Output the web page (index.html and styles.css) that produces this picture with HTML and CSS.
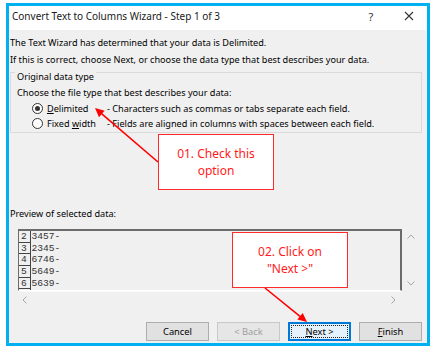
FILE: index.html
```html
<!DOCTYPE html>
<html>
<head>
<meta charset="utf-8">
<link rel="stylesheet" href="styles.css">
</head>
<body>
<div class="dialog">
  <div class="titlebar">
    <span class="title">Convert Text to Columns Wizard - Step 1 of 3</span>
    <span class="help">?</span>
    <span class="close">
      <svg width="10" height="10" viewBox="0 0 10 10"><path d="M1 1L9 9M9 1L1 9" stroke="#333" stroke-width="1.1" fill="none"/></svg>
    </span>
  </div>
  <div class="content">
    <p class="line">The Text Wizard has determined that your data is Delimited.</p>
    <p class="line">If this is correct, choose Next, or choose the data type that best describes your data.</p>
    <div class="group">
      <div class="legend">Original data type</div>
      <div class="choose">Choose the file type that best describes your data:</div>
      <div class="radio-row">
        <span class="radio checked"></span>
        <span class="rlabel"><u>D</u>elimited</span>
        <span class="rdesc">- Characters such as commas or tabs separate each field.</span>
      </div>
      <div class="radio-row">
        <span class="radio"></span>
        <span class="rlabel">Fixed <u>w</u>idth</span>
        <span class="rdesc">- Fields are aligned in columns with spaces between each field.</span>
      </div>
    </div>
    <div class="preview-label">Preview of selected data:</div>
    <div class="preview">
      <div class="pbox">
        <div class="prow"><span class="pnum">2</span><span class="pdata">3457-</span></div>
        <div class="prow"><span class="pnum">3</span><span class="pdata">2345-</span></div>
        <div class="prow"><span class="pnum">4</span><span class="pdata">6746-</span></div>
        <div class="prow"><span class="pnum">5</span><span class="pdata">5649-</span></div>
        <div class="prow"><span class="pnum">6</span><span class="pdata">5639-</span></div>
        <div class="prow"><span class="pnum"></span></div>
      </div>
      <div class="vscroll">
        <svg width="8" height="5" viewBox="0 0 8 5"><path d="M0.5 4.5L4 1L7.5 4.5" stroke="#a6a6a6" fill="none"/></svg>
        <svg width="8" height="5" viewBox="0 0 8 5"><path d="M0.5 0.5L4 4L7.5 0.5" stroke="#a6a6a6" fill="none"/></svg>
      </div>
      <div class="hscroll">
        <svg width="5" height="8" viewBox="0 0 5 8"><path d="M4.5 0.5L1 4L4.5 7.5" stroke="#a6a6a6" fill="none"/></svg>
        <svg width="5" height="8" viewBox="0 0 5 8"><path d="M0.5 0.5L4 4L0.5 7.5" stroke="#a6a6a6" fill="none"/></svg>
      </div>
      <div class="corner"></div>
    </div>
    <div class="buttons">
      <div class="btn"><span>Cancel</span></div>
      <div class="btn disabled"><span>&lt; Back</span></div>
      <div class="btn focused"><span class="focus-rect"><span><u>N</u>ext &gt;</span></span></div>
      <div class="btn"><span><u>F</u>inish</span></div>
    </div>
  </div>
</div>

<div class="callout c1">01. Check this<br>option</div>
<div class="callout c2">02. Click on<br>"Next &gt;"</div>

<svg class="arrows" width="435" height="352" viewBox="0 0 435 352">
  <line x1="158" y1="162" x2="101.8" y2="113.9" stroke="#ff0000" stroke-width="1.6"/>
  <polygon points="95,108 104.6,110.8 99,117.2" fill="#ff0000"/>
  <line x1="265" y1="288" x2="300" y2="316.3" stroke="#ff0000" stroke-width="1.6"/>
  <polygon points="307,322 297.3,319.6 302.7,313" fill="#ff0000"/>
</svg>
</body>
</html>
```

FILE: styles.css
```css
html, body {
  margin: 0;
  padding: 0;
  background: #ffffff;
}
body {
  width: 435px;
  height: 352px;
  position: relative;
  overflow: hidden;
  font-family: "Noto Sans", "Open Sans", sans-serif;
  font-size: 9.15px;
  color: #000;
}
.dialog {
  box-sizing: border-box;
  width: 424px;
  height: 343px;
  margin: 3px 0 0 6px;
  border: 3px solid #00b0f0;
  background: #f0f0f0;
  display: flex;
  flex-direction: column;
}
.titlebar {
  height: 24px;
  background: #ffffff;
  display: flex;
  align-items: center;
  padding: 0 0 4px 3px;
  box-sizing: border-box;
  font-size: 10px;
}
.title {
  flex: 1;
  color: #1a1a1a;
}
.help {
  width: 12px;
  text-align: center;
  margin-right: 27px;
  font-size: 11px;
  color: #333;
}
.close {
  width: 10px;
  height: 10px;
  display: flex;
  margin-right: 13px;
}
.content {
  flex: 1;
  display: flex;
  flex-direction: column;
  padding: 4px 5px 2px 1px;
}
.line {
  margin: 0;
  line-height: 17px;
  height: 17px;
  white-space: nowrap;
}
.group {
  margin-top: 4px;
  height: 61px;
  box-sizing: border-box;
  border: 1px solid #dadada;
  padding: 0 0 0 6px;
  display: flex;
  flex-direction: column;
}
.legend {
  align-self: flex-start;
  margin: -2px 0 0 -2px;
  padding: 0 2px;
  background: #f0f0f0;
  line-height: 12px;
  height: 12px;
}
.choose {
  margin-top: 4px;
  line-height: 12px;
  height: 12px;
}
.radio-row {
  display: flex;
  align-items: center;
  height: 15px;
  margin-left: 15px;
}
.choose + .radio-row {
  margin-top: 1.5px;
}
.radio {
  box-sizing: border-box;
  width: 11px;
  height: 11px;
  border: 1px solid #333;
  border-radius: 50%;
  background: #fff;
  display: flex;
  align-items: center;
  justify-content: center;
}
.radio.checked::after {
  content: "";
  width: 5px;
  height: 5px;
  border-radius: 50%;
  background: #333;
}
.rlabel {
  margin-left: 4px;
  width: 60px;
}
.rdesc {
  white-space: nowrap;
}
.preview-label {
  margin-top: 75px;
  line-height: 12px;
  height: 12px;
}
.preview {
  margin: 9px 0 0 8px;
  display: grid;
  grid-template-columns: 384px 16px;
  grid-template-rows: 62px 17px;
}
.pbox {
  box-sizing: border-box;
  border-top: 2px solid #6b6b6b;
  border-left: 1px solid #6b6b6b;
  border-right: 2px solid #6b6b6b;
  border-bottom: 1px solid #ffffff;
  overflow: hidden;
  font-family: "Liberation Mono", "DejaVu Sans Mono", monospace;
  font-size: 9.6px;
  color: #333;
}
.prow {
  display: flex;
  height: 11.7px;
  line-height: 11.7px;
}
.pnum {
  box-sizing: border-box;
  width: 12px;
  border-right: 1px solid #444;
  border-bottom: 1px solid #444;
  padding-left: 2px;
}
.pdata {
  padding-left: 0.5px;
}
.vscroll {
  display: flex;
  flex-direction: column;
  justify-content: space-between;
  align-items: center;
  padding: 5px 0 5px 1px;
  box-sizing: border-box;
}
.hscroll {
  display: flex;
  justify-content: space-between;
  align-items: center;
  padding: 0 6px 0 4px;
  border-top: 1px solid #fafafa;
}
.buttons {
  margin-top: auto;
  display: flex;
  justify-content: flex-end;
  gap: 8px;
}
.btn {
  box-sizing: border-box;
  width: 63px;
  height: 19px;
  background: #e1e1e1;
  border: 1px solid #adadad;
  display: flex;
  align-items: center;
  justify-content: center;
  font-size: 9.3px;
  color: #000;
  white-space: pre;
}
.btn.disabled {
  color: #a0a0a0;
  background: #e6e6e6;
  border-color: #c8c8c8;
}
.btn.focused {
  border: 1px solid #0078d7;
  box-shadow: inset 0 0 0 1px #0078d7;
  background: #e5f1fb;
  padding: 2px;
}
.focus-rect {
  box-sizing: border-box;
  width: 100%;
  height: 100%;
  border: 1px dotted #222;
  display: flex;
  align-items: center;
  justify-content: center;
}
.callout {
  position: absolute;
  box-sizing: border-box;
  width: 116px;
  height: 56px;
  background: #ffffff;
  border: 1.5px solid #ff2a2a;
  color: #ff1a1a;
  font-family: "Noto Sans", "Open Sans", sans-serif;
  font-size: 12px;
  line-height: 17px;
  display: flex;
  align-items: center;
  justify-content: center;
  text-align: center;
}
.c1 {
  left: 158px;
  top: 134px;
}
.c2 {
  left: 232px;
  top: 232px;
}
.arrows {
  position: absolute;
  left: 0;
  top: 0;
  pointer-events: none;
}
```
